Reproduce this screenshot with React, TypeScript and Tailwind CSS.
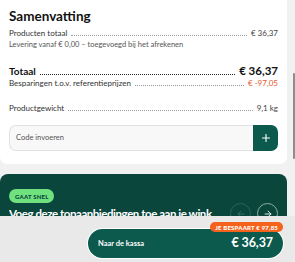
import React from "react";
import { ArrowLeft, ArrowRight, Plus } from "lucide-react";

const font = { fontFamily: "Lato, 'Noto Sans', sans-serif" };

function Row({ label, value, strong, valueClass }: { label: string; value: string; strong?: boolean; valueClass?: string }) {
  return (
    <div className={`flex items-baseline gap-[2px] ${strong ? "h-[12px] leading-[12px]" : "h-[10px] leading-[10px]"}`}>
      <span className={strong ? "text-[10px] font-bold text-[#111]" : "text-[8px] text-[#333]"}>{label}</span>
      <span className={`flex-1 border-b border-dotted ${strong ? "border-[#222]" : "border-[#999]"} mx-[2px]`} />
      <span className={valueClass ?? (strong ? "text-[11.5px] font-bold text-[#111]" : "text-[8px] text-[#444]")}>{value}</span>
    </div>
  );
}

export default function App() {
  return (
    <div className="relative w-[295px] h-[262px] overflow-hidden bg-[#f1f1f1]" style={font}>
      {/* Summary card */}
      <div className="w-[287px] bg-white rounded-b-[7px] px-[9px] pt-[7px] pb-[13px]">
        <h2 className="text-[13.5px] font-bold text-[#111] leading-[18px]">Samenvatting</h2>
        <div className="mt-[3px]">
          <Row label="Producten totaal" value="€ 36,37" />
        </div>
        <p className="mt-[1px] text-[7.5px] text-[#555] leading-[11px]">
          Levering vanaf € 0,00 – toegevoegd bij het afrekenen
        </p>
        <div className="mt-[15px]">
          <Row label="Totaal" value="€ 36,37" strong />
        </div>
        <div className="mt-[1px]">
          <Row label="Besparingen t.o.v. referentieprijzen" value="€ -97,05" valueClass="text-[8px] text-[#e4572e]" />
        </div>
        <div className="mt-[15px]">
          <Row label="Productgewicht" value="9,1 kg" />
        </div>
        <div className="mt-[12px] flex h-[26px]">
          <div className="flex-1 flex items-center rounded-l-[7px] border border-r-0 border-[#e2e2e2] bg-[#f8f8f8] px-[6px] text-[7.5px] text-[#555]">
            Code invoeren
          </div>
          <button className="w-[25px] flex items-center justify-center rounded-r-[7px] bg-[#0b5a4d] text-white">
            <Plus size={12} strokeWidth={2.2} />
          </button>
        </div>
      </div>

      {/* Promo card */}
      <div className="mt-[10px] w-[287px] h-[80px] rounded-[8px] bg-[#0a463c] pl-[9px] pr-[9px] pt-[15px]">
        <div className="flex h-[14px]">
          <span className="flex items-center h-[14px] px-[6px] rounded-full bg-[#6fe17e] text-[6px] font-black tracking-[0.2px] text-[#0a463c]">
            GAAT SNEL
          </span>
        </div>
        <div className="flex items-center h-[21px]">
          <span className="flex-1 overflow-hidden whitespace-nowrap pt-[1px] text-[11.5px] leading-[16px] tracking-[-0.45px] font-bold text-white">
            Voeg deze topaanbiedingen toe aan je wink...
          </span>
          <div className="flex gap-[6px] ml-[4px]">
            <span className="w-[21px] h-[21px] rounded-full border border-[#2c6359] flex items-center justify-center text-[#3e7469]">
              <ArrowLeft size={10} />
            </span>
            <span className="w-[21px] h-[21px] rounded-full border border-[#8fb0a9] flex items-center justify-center text-white">
              <ArrowRight size={10} />
            </span>
          </div>
        </div>
      </div>

      {/* Scrollbar */}
      <div className="absolute right-0 top-[73px] w-[2px] h-[86px] bg-[#8d8d8d] rounded-full" />

      {/* Sticky checkout bar */}
      <div className="absolute left-0 right-0 bottom-0 h-[46px] bg-[#e9e9e9] flex justify-end pr-[12px] pt-[13px]">
        <div className="relative w-[195px] h-[29px] rounded-full bg-[#0b5a4d] ring-1 ring-white flex items-center justify-between pl-[10px] pr-[10px]">
          <span className="text-[7.5px] font-bold text-white">Naar de kassa</span>
          <span className="text-[12.5px] font-bold text-white tracking-[-0.1px]">€ 36,37</span>
          <span className="absolute right-0 top-[-7px] h-[10px] px-[5px] rounded-full bg-[#f4621c] flex items-center text-[6px] font-black text-white tracking-[0.2px]">
            JE BESPAART € 97,85
          </span>
        </div>
      </div>
    </div>
  );
}
